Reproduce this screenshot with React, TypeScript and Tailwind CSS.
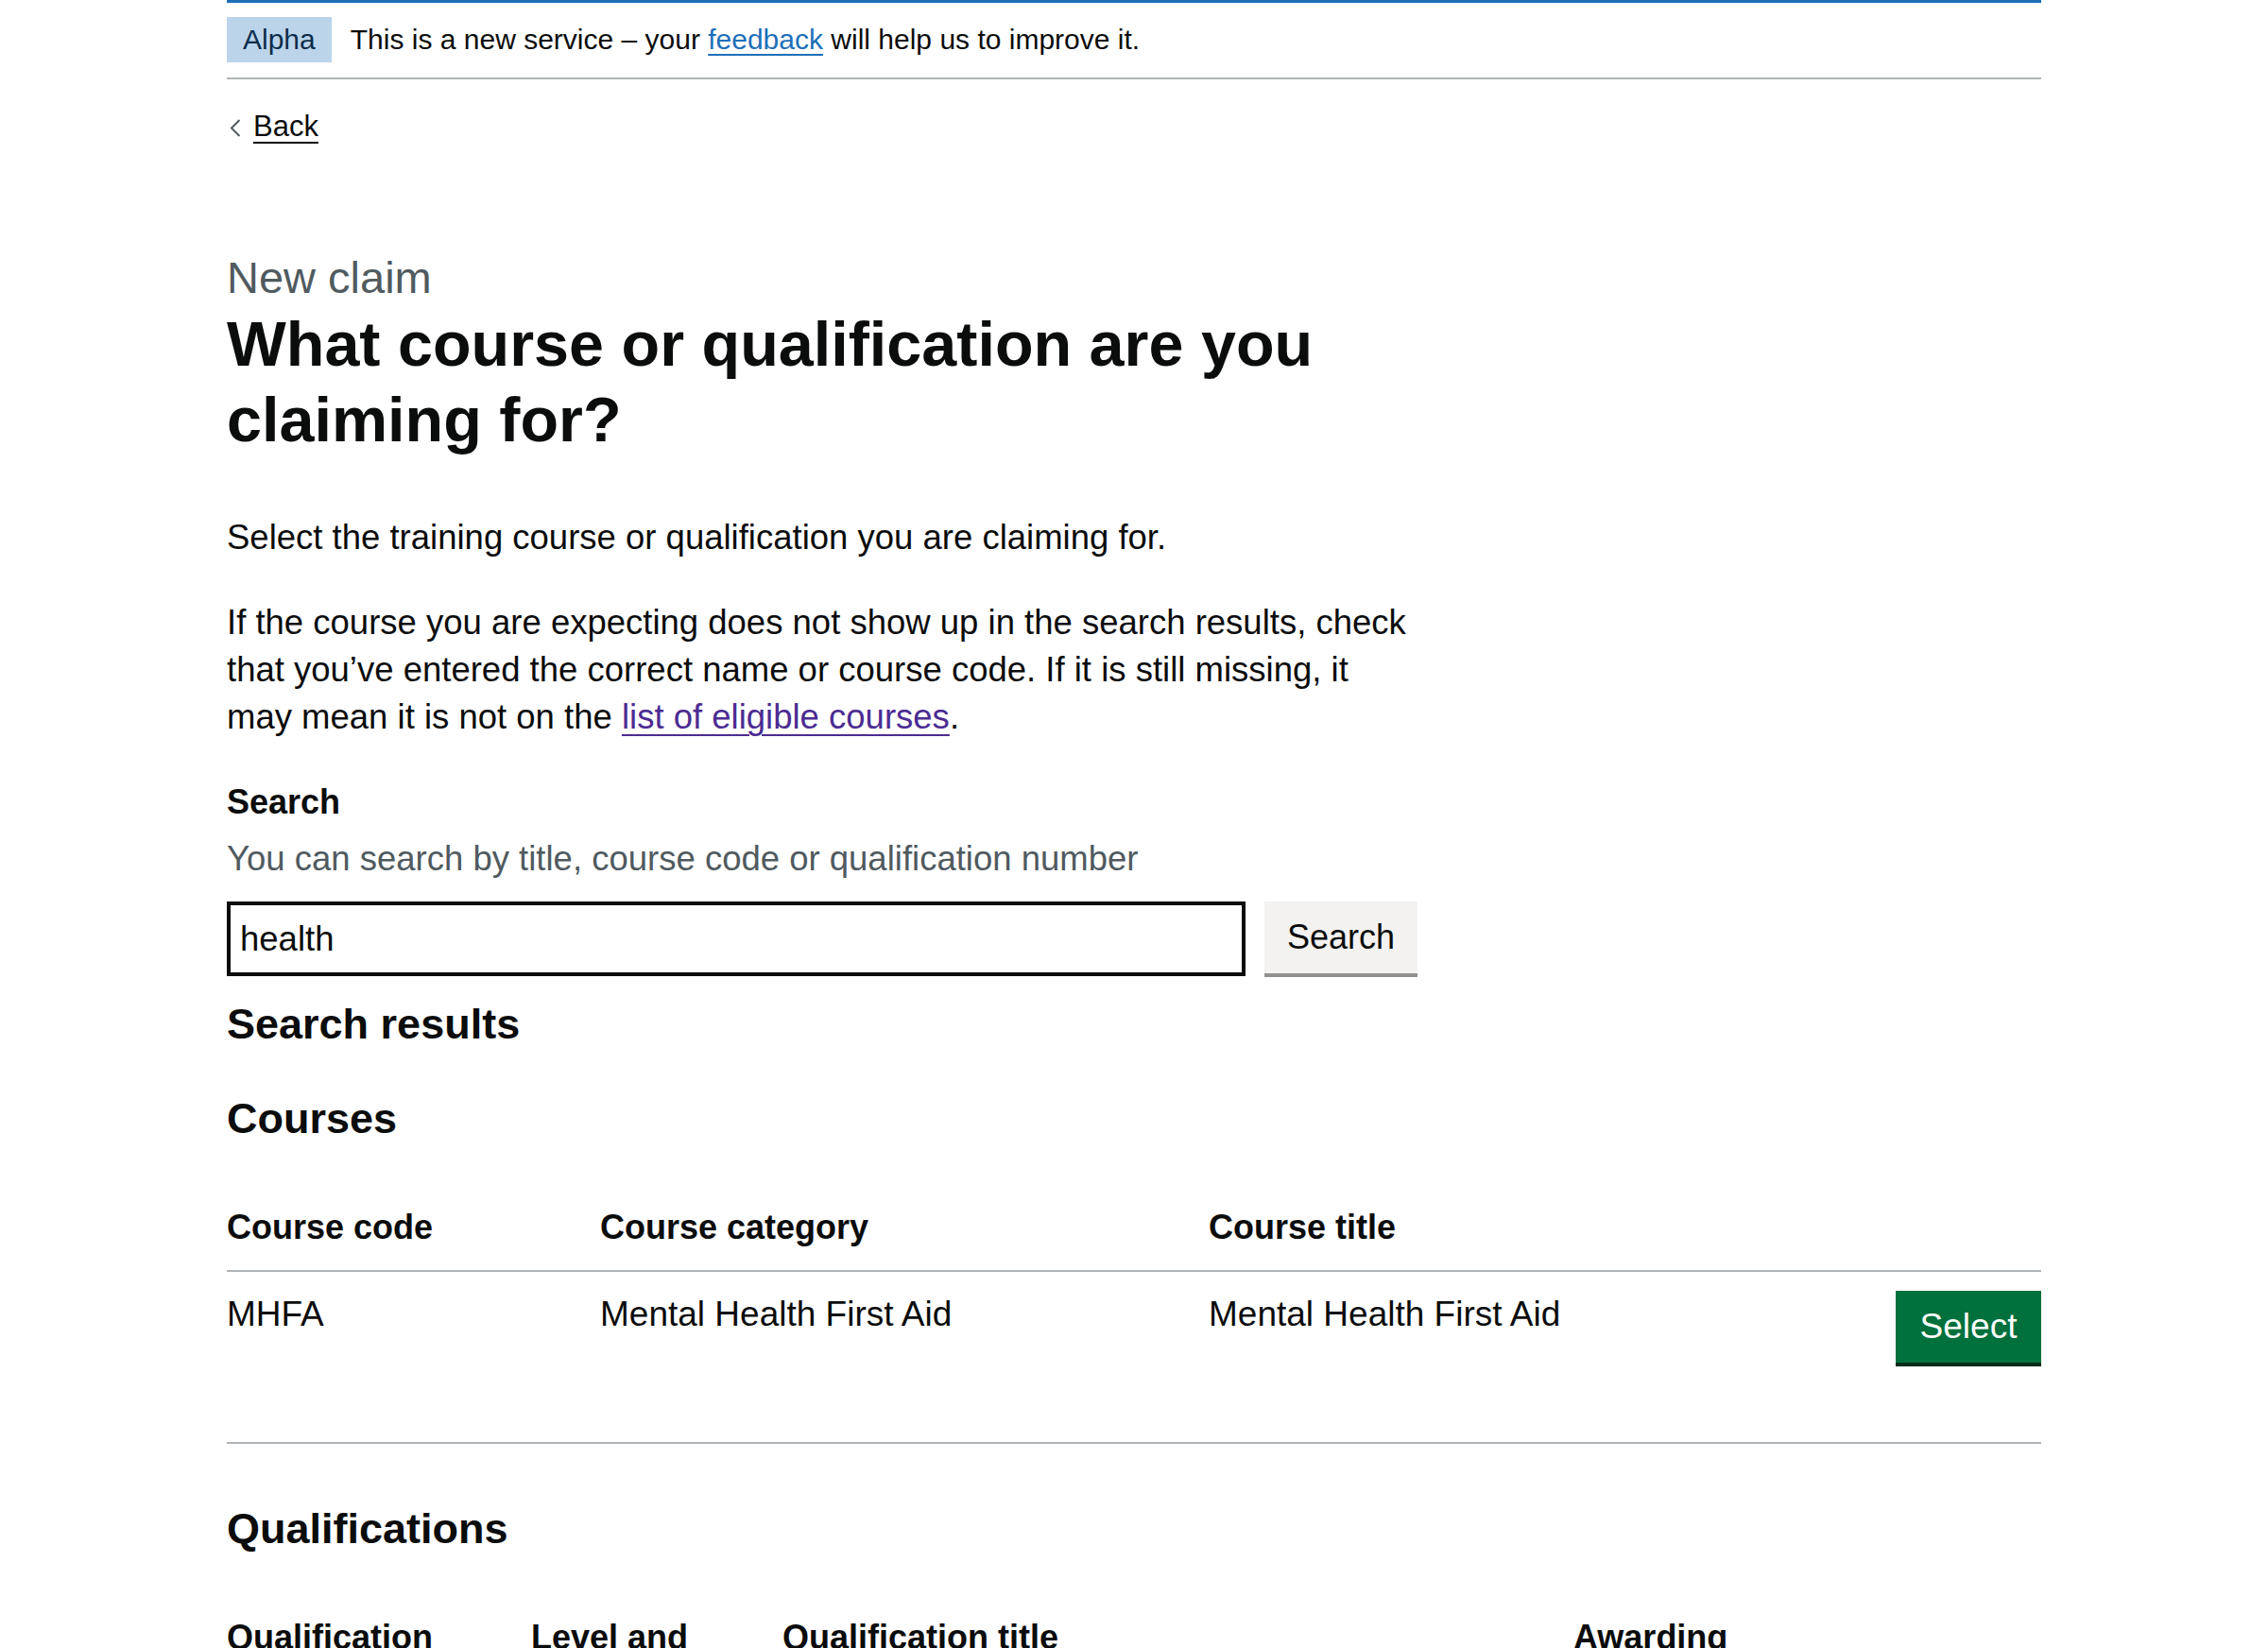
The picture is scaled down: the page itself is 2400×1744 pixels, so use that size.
import React from "react";

const courses = [{ code: "MHFA", category: "Mental Health First Aid", title: "Mental Health First Aid" }];

export default function App() {
  return (
    <div className="min-h-screen bg-white font-['Liberation_Sans',Arial,sans-serif] text-[#0b0c0c]">
      <div className="mx-[240px]">
        <div className="h-[3px] bg-[#1d70b8]" />

        {/* phase banner */}
        <div className="flex items-center gap-[20px] border-b-2 border-[#b1b4b6] pt-[15px] pb-[16px]">
          <strong className="h-[48px] bg-[#bbd4ea] px-[17px] text-[30px] font-normal leading-[48px] text-[#0c2d4a]">
            Alpha
          </strong>
          <span className="text-[30px] leading-[40px]">
            This is a new service – your{" "}
            <a href="#" className="text-[#1d70b8] underline decoration-[2px] underline-offset-[5px]">
              feedback
            </a>{" "}
            will help us to improve it.
          </span>
        </div>

        <a href="#" className="mt-[30px] flex h-[40px] items-center gap-[13px] pl-[3px] text-[31px] leading-[40px]">
          <svg width="12" height="19" viewBox="0 0 12 19" className="mt-[3px] shrink-0">
            <polyline points="10.5,1 2,9.5 10.5,18" fill="none" stroke="#505a5f" strokeWidth="2" />
          </svg>
          <span className="underline decoration-[2px] underline-offset-[6px]">Back</span>
        </a>

        <main className="pt-[110px]">
          <span className="block text-[47px] leading-[60px] text-[#505a5f]">New claim</span>
          <h1 className="mb-[60px] max-w-[1260px] text-[66.5px] font-bold leading-[80px]">
            What course or qualification are you claiming for?
          </h1>

          <p className="mb-[40px] text-[36.5px] leading-[50px]">Select the training course or qualification you are claiming for.</p>
          <p className="mb-[40px] max-w-[1256px] text-[36.5px] leading-[50px]">
            If the course you are expecting does not show up in the search results, check that you’ve entered the correct
            name or course code. If it is still missing, it may mean it is not on the{" "}
            <a href="#" className="text-[#4c2c92] underline decoration-[2px] underline-offset-[6px]">
              list of eligible courses
            </a>
            .
          </p>

          <label className="mb-[10px] block text-[36px] font-bold leading-[50px]">Search</label>
          <div className="mb-[20px] text-[36.5px] leading-[50px] text-[#505a5f]">
            You can search by title, course code or qualification number
          </div>
          <div className="flex items-start gap-[20px]">
            <input
              defaultValue="health"
              className="h-[79px] w-[1078px] border-4 border-[#0b0c0c] px-[10px] text-[36.5px] outline-none"
            />
            <button className="h-[76px] w-[162px] bg-[#f3f2f1] text-[36px] shadow-[0_4px_0_#929191]">Search</button>
          </div>

          <h2 className="mt-[21px] mb-[40px] text-[45px] font-bold leading-[60px]">Search results</h2>
          <h2 className="mb-[40px] text-[45px] font-bold leading-[60px]">Courses</h2>

          <table className="w-full table-fixed text-left text-[37px] leading-[50px]">
            <colgroup>
              <col className="w-[395px]" />
              <col className="w-[644px]" />
              <col />
              <col className="w-[154px]" />
            </colgroup>
            <thead>
              <tr className="border-b-2 border-[#b1b4b6]">
                <th className="py-[20px] pr-[40px] text-[36px] font-bold">Course code</th>
                <th className="py-[20px] pr-[40px] text-[36px] font-bold">Course category</th>
                <th className="py-[20px] pr-[40px] text-[36px] font-bold">Course title</th>
                <th className="py-[20px]" />
              </tr>
            </thead>
            <tbody>
              {courses.map((row) => (
                <tr key={row.code} className="border-b-2 border-[#b1b4b6]">
                  <td className="py-[20px] pr-[40px] align-top">{row.code}</td>
                  <td className="py-[20px] pr-[40px] align-top">{row.category}</td>
                  <td className="py-[20px] pr-[40px] align-top">{row.title}</td>
                  <td className="py-[20px] text-right align-top">
                    <button className="mb-[64px] h-[76px] w-[154px] bg-[#00703c] text-[37px] text-white shadow-[0_4px_0_#002d18]">
                      Select
                    </button>
                  </td>
                </tr>
              ))}
            </tbody>
          </table>

          <h2 className="mt-[60px] mb-[40px] text-[45px] font-bold leading-[60px]">Qualifications</h2>

          <table className="w-full table-fixed text-left text-[36px] leading-[50px]">
            <colgroup>
              <col className="w-[322px]" />
              <col className="w-[266px]" />
              <col className="w-[837px]" />
              <col className="w-[270px]" />
              <col />
            </colgroup>
            <thead>
              <tr className="border-b-2 border-[#b1b4b6]">
                <th className="py-[20px] pr-[40px] align-top font-bold">Qualification number</th>
                <th className="py-[20px] pr-[40px] align-top font-bold">Level and category</th>
                <th className="py-[20px] pr-[40px] align-top font-bold">Qualification title</th>
                <th className="py-[20px] pr-[40px] align-top font-bold">Awarding body</th>
                <th className="py-[20px]" />
              </tr>
            </thead>
          </table>
        </main>
      </div>
    </div>
  );
}
